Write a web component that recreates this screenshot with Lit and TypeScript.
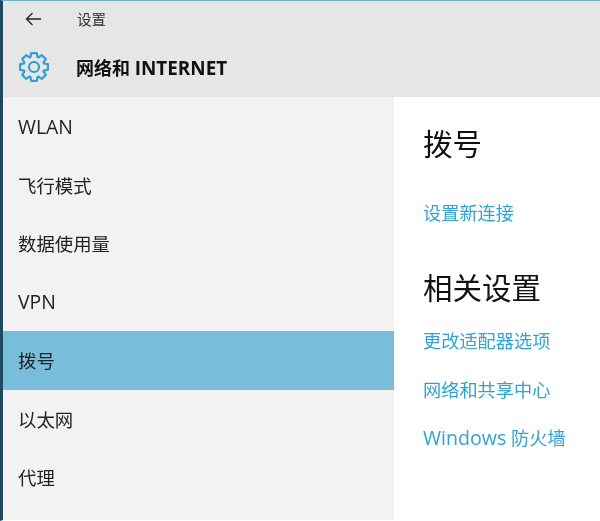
import { LitElement, html, css } from "lit";
import { customElement } from "lit/decorators.js";

const NAV = ["WLAN", "飞行模式", "数据使用量", "VPN", "拨号", "以太网", "代理"];
const SEL = "拨号";
const isLatin = (s: string) => /^[A-Za-z]+$/.test(s);

function gearPath(): string {
  const cx = 16, cy = 16, teeth = 8, ro = 14.2, ri = 10.6;
  let d = "";
  for (let i = 0; i < teeth; i++) {
    const a = (i * 2 * Math.PI) / teeth - Math.PI / 2;
    const p = (r: number, o: number) =>
      `${(cx + r * Math.cos(a + o)).toFixed(2)} ${(cy + r * Math.sin(a + o)).toFixed(2)}`;
    d += `${i === 0 ? "M" : "L"}${p(ri, -0.34)} L${p(ro, -0.2)} L${p(ro, 0.2)} L${p(ri, 0.34)} `;
  }
  return d + "Z";
}

@customElement("app-root")
export class AppRoot extends LitElement {
  static styles = css`
    :host {
      display: block;
      width: 600px;
      height: 521px;
      overflow: hidden;
      background: #fff;
      font-family: "Open Sans", "Noto Sans CJK SC", sans-serif;
      color: #1a1a1a;
    }
    .win {
      height: 100%;
      display: flex;
      flex-direction: column;
      border-left: 3px solid #1d4a60;
      border-top: 1px solid #6fb1cf;
      border-bottom: 1px solid #fff;
      box-sizing: border-box;
    }
    .head {
      height: 96px;
      background: #e6e6e6;
      flex: none;
      display: flex;
      flex-direction: column;
    }
    .top {
      height: 35px;
      display: flex;
      align-items: center;
      padding-left: 22px;
      gap: 35px;
      font-size: 14.5px;
      color: #333;
    }
    .top svg { margin-top: 1px; }
    .title {
      display: flex;
      align-items: center;
      margin-top: 2px;
      padding-left: 15px;
      gap: 26px;
      height: 60px;
      font-size: 18px;
      font-weight: 700;
      color: #111;
    }
    .title .lat { font-size: 18.9px; }
    .body {
      flex: 1;
      display: flex;
      min-height: 0;
    }
    nav {
      width: 391px;
      flex: none;
      background: #f2f2f2;
      display: flex;
      flex-direction: column;
    }
    .item {
      height: 58.5px;
      flex: none;
      display: flex;
      align-items: center;
      padding-left: 15px;
      font-size: 18.4px;
      color: #222;
    }
    .item.lat { font-size: 19.4px; }
    .item.sel {
      background: #78bedb;
    }
    main {
      flex: 1;
      padding: 24px 0 0 29px;
      display: flex;
      flex-direction: column;
      align-items: flex-start;
    }
    h2 {
      margin: 0;
      font-size: 29.5px;
      font-weight: 400;
      line-height: 46px;
      color: #111;
    }
    a {
      font-size: 18.2px;
      line-height: 25px;
      color: #32a3d4;
      text-decoration: none;
    }
    a .lat { font-size: 19.6px; }
    .l1 { margin-top: 34px; }
    .h2b { margin-top: 39px; }
    .links {
      margin-top: 18px;
      display: flex;
      flex-direction: column;
      gap: 24px;
    }
    .links a:last-child { margin-top: -2px; }
    .soft { filter: blur(0.3px); }
  `;

  render() {
    return html`<div class="win">
      <div class="head">
        <div class="top">
          <svg width="17" height="14" viewBox="0 0 17 14" fill="none" stroke="#222" stroke-width="1.3">
            <path d="M16 7H1.5M7.5 1L1.5 7l6 6" />
          </svg>
          <span class="soft">设置</span>
        </div>
        <div class="title">
          <svg width="32" height="32" viewBox="0 0 32 32" fill="none" stroke="#2fa0d2" stroke-width="2.2" stroke-linejoin="round">
            <path d="${gearPath()}" />
            <circle cx="16" cy="16" r="5" />
          </svg>
          <span class="soft">网络和 <span class="lat">INTERNET</span></span>
        </div>
      </div>
      <div class="body">
        <nav>
          ${NAV.map(
            (n) => html`<div class="item ${n === SEL ? "sel" : ""} ${isLatin(n) ? "lat" : ""}"><span class="soft">${n}</span></div>`
          )}
        </nav>
        <main>
          <h2 class="soft">拨号</h2>
          <a class="l1 soft" href="#">设置新连接</a>
          <h2 class="h2b soft">相关设置</h2>
          <div class="links soft">
            <a href="#">更改适配器选项</a>
            <a href="#">网络和共享中心</a>
            <a href="#"><span class="lat">Windows</span> 防火墙</a>
          </div>
        </main>
      </div>
    </div>`;
  }
}
